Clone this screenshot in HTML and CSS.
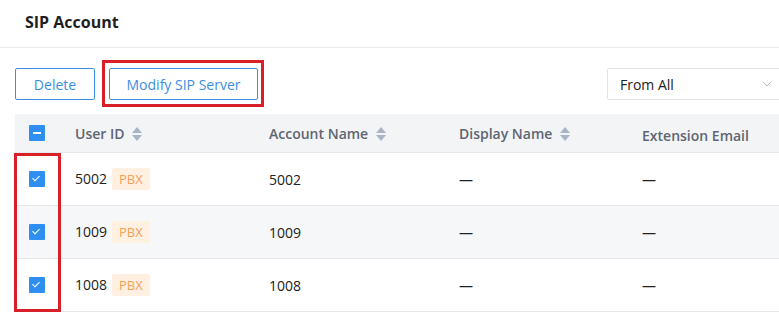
FILE: index.html
```html
<!DOCTYPE html>
<html lang="en">
<head>
  <meta charset="UTF-8">
  <title>SIP Account</title>
  <link rel="stylesheet" href="styles.css">
</head>
<body>

<div class="page">
  <div class="title-bar">SIP Account</div>

  <div class="toolbar">
    <button class="btn">Delete</button>
    <div class="mark-box">
      <button class="btn btn-wide">Modify SIP Server</button>
    </div>
    <div class="select">
      <span>From All</span>
      <svg width="10" height="6" viewBox="0 0 10 6"><path d="M0.5 0.5 L5 5 L9.5 0.5" fill="none" stroke="#b4b9c2" stroke-width="1"/></svg>
    </div>
  </div>

  <div class="table-wrap">
    <table class="grid">
      <thead>
        <tr>
          <th class="col-check"><span class="check partial"></span></th>
          <th class="col-id">User ID <span class="sort"></span></th>
          <th class="col-name">Account Name <span class="sort"></span></th>
          <th class="col-display">Display Name <span class="sort"></span></th>
          <th class="col-email plain">Extension Email</th>
        </tr>
      </thead>
      <tbody id="rows"></tbody>
    </table>
    <div class="mark-column"></div>
  </div>
</div>

<script>
  const accounts = [
    { id: "5002", name: "5002" },
    { id: "1009", name: "1009" },
    { id: "1008", name: "1008" }
  ];

  const rows = document.getElementById('rows');

  accounts.forEach(a => {
    const tr = document.createElement('tr');
    tr.innerHTML = `
      <td class="col-check"><span class="check checked"></span></td>
      <td>${a.id}<span class="tag">PBX</span></td>
      <td>${a.name}</td>
      <td>—</td>
      <td>—</td>
    `;
    rows.appendChild(tr);
  });
</script>

</body>
</html>
```

FILE: styles.css
```css
html, body {
  margin: 0;
  background: #fff;
  overflow: hidden;
}
body {
  font-family: 'Open Sans', sans-serif;
  font-size: 14px;
  color: #222;
}
.page {
  width: 810px;
}
.title-bar {
  height: 47px;
  line-height: 45px;
  padding-left: 25px;
  font-size: 16px;
  font-weight: 700;
  color: #1f1f1f;
  border-bottom: 1px solid #e9eaec;
}
.toolbar {
  display: flex;
  align-items: center;
  padding: 20px 0 0 15px;
  height: 32px;
}
.btn {
  height: 32px;
  width: 80px;
  padding: 0;
  font-family: inherit;
  font-size: 14px;
  color: #3b8fe0;
  background: #fff;
  border: 1px solid #3b8fe0;
  border-radius: 2px;
}
.btn-wide {
  width: 149px;
}
.mark-box {
  margin: -8px 0 -7px 7px;
  padding: 5px 3px 4px 4px;
  border: 3px solid #d8202a;
}
.select {
  margin-left: auto;
  margin-right: 15px;
  width: 162px;
  height: 30px;
  border: 1px solid #dfe2e6;
  border-radius: 2px;
  display: flex;
  align-items: center;
  justify-content: space-between;
  padding: 0 12px;
  color: #222;
}
.select svg {
  margin-right: 10px;
}
.table-wrap {
  position: relative;
  margin: 14px 0 0 15px;
}
.grid {
  border-collapse: collapse;
  width: 795px;
  table-layout: fixed;
}
.grid th {
  height: 38px;
  background: #f2f4f6;
  text-align: left;
  font-weight: 600;
  color: #5e6672;
  padding: 0 14px;
  border-bottom: 1px solid #e6e8eb;
}
.grid th.plain {
  padding-top: 5px;
  height: 33px;
}
.grid td {
  height: 52px;
  padding: 0 14px;
  border-bottom: 1px solid #e6e8eb;
}
.grid tbody tr:nth-child(2) td {
  background: #f5f7f9;
}
.col-check { width: 18px; }
.col-id { width: 166px; }
.col-name { width: 162px; }
.col-display { width: 155px; }
.col-email { width: 180px; }
.check {
  display: block;
  width: 16px;
  height: 16px;
  background: #2f8ff0;
  border-radius: 1px;
  position: relative;
}
.check.partial::after {
  content: "";
  position: absolute;
  left: 4px;
  top: 7px;
  width: 8px;
  height: 2px;
  background: #fff;
}
.check.checked::after {
  content: "";
  position: absolute;
  left: 5px;
  top: 3px;
  width: 3px;
  height: 6px;
  border: solid #fff;
  border-width: 0 1px 1px 0;
  transform: rotate(45deg);
}
.sort {
  display: inline-block;
  width: 10px;
  height: 14px;
  margin-left: 4px;
  vertical-align: -2px;
  position: relative;
}
.sort::before, .sort::after {
  content: "";
  position: absolute;
  left: 0;
  border-left: 5px solid transparent;
  border-right: 5px solid transparent;
}
.sort::before {
  top: 0;
  border-bottom: 6px solid #a9b4c6;
}
.sort::after {
  bottom: 0;
  border-top: 6px solid #a9b4c6;
}
.tag {
  display: inline-block;
  margin-left: 5px;
  padding: 0 7px;
  height: 22px;
  line-height: 22px;
  font-size: 13px;
  color: #f4a058;
  background: #fff0e1;
  border-radius: 2px;
}
.mark-column {
  position: absolute;
  left: -1px;
  top: 39px;
  width: 41px;
  height: 153px;
  border: 3px solid #d8202a;
}
```
